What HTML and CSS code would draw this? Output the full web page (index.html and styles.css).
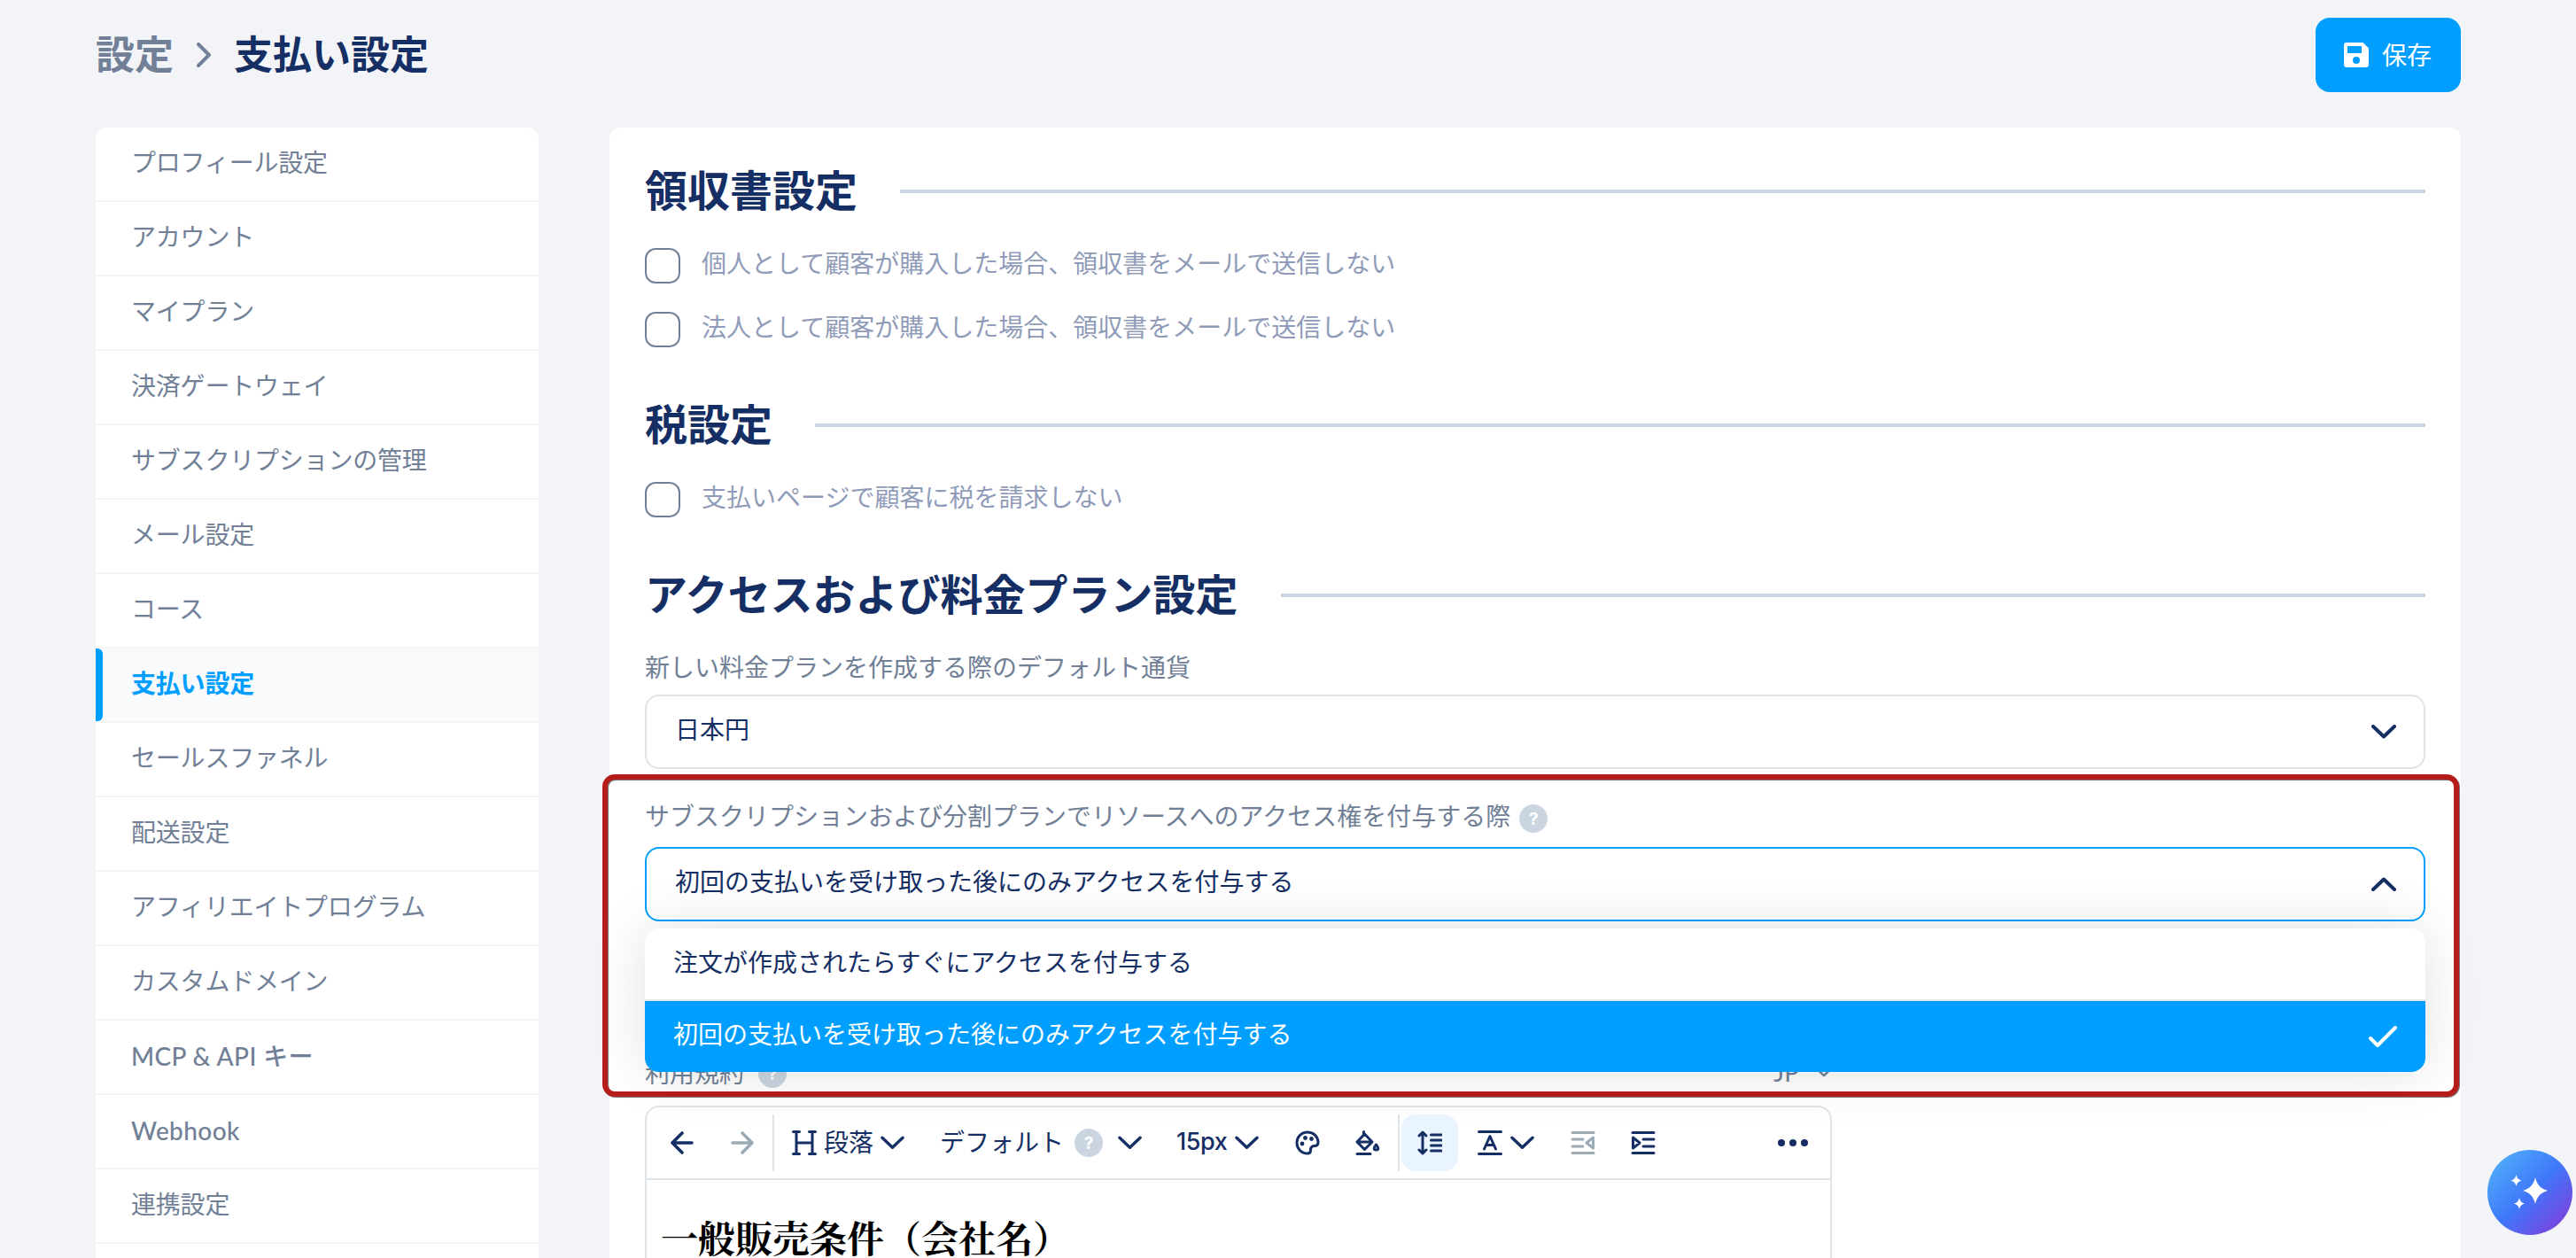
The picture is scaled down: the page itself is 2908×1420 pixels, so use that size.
FILE: index.html
```
<!DOCTYPE html>
<html lang="ja">
<head>
    <meta charset="UTF-8">
    <meta name="viewport" content="width=device-width, initial-scale=1.0">
    <title>支払い設定</title>
    <link rel="stylesheet" href="styles.css">
</head>
<body>
    <!-- Iconos compartidos -->
    <svg class="sprite" aria-hidden="true">
        <symbol id="chevron" viewBox="0 0 28 16">
            <path d="M2 2l12 11.5L26 2" />
        </symbol>
        <symbol id="arrow" viewBox="0 0 28 28">
            <path d="M25 14H3M14 3L3 14l11 11" />
        </symbol>
    </svg>

    <header class="topbar">
        <nav class="breadcrumb">
            <a class="parent">設定</a>
            <svg class="sep" viewBox="0 0 16 28"><path d="M2 2l12 12L2 26" /></svg>
            <h1>支払い設定</h1>
        </nav>
        <button class="save">
            <svg viewBox="0 0 28 28"><path fill-rule="evenodd" d="M3 0h18.5L28 6.5V25a3 3 0 0 1-3 3H3a3 3 0 0 1-3-3V3a3 3 0 0 1 3-3zM4 4v8h16V4zM14 16a4 4 0 1 0 0 8 4 4 0 0 0 0-8z" /></svg>
            <span>保存</span>
        </button>
    </header>

    <div class="layout">
        <aside class="sidebar">
            <a>プロフィール設定</a>
            <a>アカウント</a>
            <a>マイプラン</a>
            <a>決済ゲートウェイ</a>
            <a>サブスクリプションの管理</a>
            <a>メール設定</a>
            <a>コース</a>
            <a class="active">支払い設定</a>
            <a>セールスファネル</a>
            <a>配送設定</a>
            <a>アフィリエイトプログラム</a>
            <a>カスタムドメイン</a>
            <a class="latin">MCP &amp; API キー</a>
            <a class="latin">Webhook</a>
            <a>連携設定</a>
            <a></a>
        </aside>

        <main class="card">
            <h2>領収書設定</h2>
            <label class="check"><i></i><span>個人として顧客が購入した場合、領収書をメールで送信しない</span></label>
            <label class="check"><i></i><span>法人として顧客が購入した場合、領収書をメールで送信しない</span></label>

            <h2>税設定</h2>
            <label class="check"><i></i><span>支払いページで顧客に税を請求しない</span></label>

            <h2>アクセスおよび料金プラン設定</h2>
            <div class="field-label currency"><span>新しい料金プランを作成する際のデフォルト通貨</span></div>
            <div class="select">
                <span>日本円</span>
                <svg><use href="#chevron" /></svg>
            </div>

            <div class="field-label access"><span>サブスクリプションおよび分割プランでリソースへのアクセス権を付与する際</span><b class="help">?</b></div>
            <div class="select open">
                <span>初回の支払いを受け取った後にのみアクセスを付与する</span>
                <svg class="up"><use href="#chevron" /></svg>
                <div class="menu">
                    <div class="option"><span>注文が作成されたらすぐにアクセスを付与する</span></div>
                    <div class="option selected">
                        <span>初回の支払いを受け取った後にのみアクセスを付与する</span>
                        <svg viewBox="0 0 32 24"><path d="M2 14l8 8L30 2" /></svg>
                    </div>
                </div>
            </div>

            <div class="terms">
                <div class="field-label"><span>利用規約</span><b class="help">?</b></div>
                <div class="lang"><span>JP</span><svg><use href="#chevron" /></svg></div>
            </div>

            <div class="editor">
                <div class="toolbar">
                    <button class="tool"><svg class="bold"><use href="#arrow" /></svg></button>
                    <button class="tool off"><svg class="bold flip"><use href="#arrow" /></svg></button>
                    <hr>
                    <button class="drop block">
                        <svg viewBox="0 0 28 28"><path d="M1.500 1.500h7M19.500 1.500h7M1.500 26.500h7M19.500 26.500h7M5 1.500v25M23 1.500v25M5 14h18" /></svg>
                        <span>段落</span>
                        <svg class="caret"><use href="#chevron" /></svg>
                    </button>
                    <button class="drop font">
                        <span>デフォルト</span>
                        <b class="help">?</b>
                        <svg class="caret"><use href="#chevron" /></svg>
                    </button>
                    <button class="drop size">
                        <span>15px</span>
                        <svg class="caret"><use href="#chevron" /></svg>
                    </button>
                    <button class="tool">
                        <svg viewBox="0 0 28 28"><path d="M14 2C7 2 2 7.500 2 14s5 12 12 12c2.500 0 3.500-1.500 3.500-3.500 0-3 1-5 4-5 3 0 4.500-1.500 4.500-4C26 7 21 2 14 2z" /><g class="solid"><circle cx="8" cy="15" r="2.400" /><circle cx="11.500" cy="8.500" r="2.400" /><circle cx="18.500" cy="9.500" r="2.400" /></g></svg>
                    </button>
                    <button class="tool">
                        <svg viewBox="0 0 28 28"><path d="M9.500 1.500v3M10.500 4L2 13l8.500 8.500L19 13zM3 13h16M2 26.500h15M23.500 16c-3 4-3 6 0 6s3-2 0-6z" /></svg>
                    </button>
                    <hr>
                    <button class="tool on">
                        <svg viewBox="0 0 28 28"><path d="M6 2v24M2 6l4-4 4 4M2 22l4 4 4-4M15.500 5H27M15.500 11H27M15.500 17H27M15.500 23H27" /></svg>
                    </button>
                    <button class="drop align">
                        <svg viewBox="0 0 28 28"><path d="M1.500 1.500h25M1.500 26.500h25M7.500 21L14 6.500 20.500 21M10 16.500h8" /></svg>
                        <svg class="caret"><use href="#chevron" /></svg>
                    </button>
                    <button class="tool off">
                        <svg viewBox="0 0 28 28"><path d="M2 2.500h24M2 25.500h24M2 10h12M2 18h12M25.500 8v12l-7.500-6z" /></svg>
                    </button>
                    <button class="tool">
                        <svg viewBox="0 0 28 28"><path d="M2 2.500h24M2 25.500h24M14 10h12M14 18h12M2.500 8v12l7.500-6z" /></svg>
                    </button>
                    <button class="tool more">
                        <svg viewBox="0 0 36 28"><g class="solid"><circle cx="5" cy="14" r="4" /><circle cx="18" cy="14" r="4" /><circle cx="31" cy="14" r="4" /></g></svg>
                    </button>
                </div>
                <div class="content">
                    <h3>一般販売条件（会社名）</h3>
                </div>
            </div>
        </main>
    </div>

    <div class="highlight"></div>

    <button class="assistant">
        <svg viewBox="0 0 44 42"><path d="M28 4c2 8.500 6 12.500 14 15-8 2.500-12 6.500-14 15-2-8.500-6-12.500-14-15 8-2.500 12-6.500 14-15zM6.500 1c1 4 2.500 5.500 6 6.500-3.500 1-5 2.500-6 6.500-1-4-2.500-5.500-6-6.500 3.500-1 5-2.500 6-6.500zM10 27c1 4 2.500 5.500 6 6.500-3.500 1-5 2.500-6 6.500-1-4-2.500-5.500-6-6.500 3.500-1 5-2.500 6-6.500z" /></svg>
    </button>
</body>
</html>
```
FILE: styles.css
```
* {
    box-sizing: border-box;
}

body {
    margin: 0;
    height: 1420px;
    overflow: hidden;
    position: relative;
    background-color: #f2f4f8;
    color: #152e64;
    font-family: "Gilroy", "Noto Sans CJK JP", sans-serif;
    font-size: 28px;
    line-height: 40px;
}

button {
    font: inherit;
    color: inherit;
    border: none;
    padding: 0;
    background: none;
}

svg {
    display: block;
    flex: none;
    fill: none;
    stroke: currentColor;
    stroke-width: 3;
    stroke-linecap: round;
    stroke-linejoin: round;
}

.sprite {
    display: none;
}

.solid {
    fill: currentColor;
    stroke: none;
}

/* Cabecera */
.topbar {
    display: flex;
    justify-content: space-between;
    align-items: flex-start;
    height: 144px;
    padding: 20px 130px 0 108px;
}

.breadcrumb {
    display: flex;
    align-items: center;
    height: 84px;
    font-size: 44px;
    font-weight: 700;
}

.breadcrumb .parent {
    margin-top: -7px;
    color: #718096;
}

.breadcrumb .sep {
    width: 16px;
    height: 28px;
    margin: 0 26px 0 26px;
    color: #718096;
    stroke-width: 4;
}

.breadcrumb h1 {
    margin: -7px 0 0;
    font-size: 44px;
}

.save {
    display: flex;
    align-items: center;
    gap: 15px;
    width: 164px;
    height: 84px;
    padding-left: 32px;
    border-radius: 16px;
    background-color: #009fff;
    color: #fff;
}

.save span {
    margin-top: -3px;
}

.save svg {
    width: 28px;
    height: 28px;
    fill: #fff;
    stroke: none;
}

.layout {
    display: flex;
    gap: 80px;
    height: 1276px;
    padding: 0 130px 0 108px;
    overflow: hidden;
}

/* Menú lateral */
.sidebar {
    width: 500px;
    flex: none;
    border-radius: 12px 12px 0 0;
    background-color: #fff;
    color: #718096;
    overflow: hidden;
}

.sidebar a {
    display: block;
    height: 84px;
    padding: 18px 0 0 40px;
    border-bottom: 2px solid #f4f5f7;
    position: relative;
    letter-spacing: -0.2px;
}

.sidebar .latin {
    padding-top: 20px;
    font-family: "Lato", "Noto Sans CJK JP", sans-serif;
    font-weight: 500;
    letter-spacing: 0.4px;
}

.sidebar .active {
    background-color: #f8fafc;
    color: #009fff;
    font-weight: 700;
}

.sidebar .active::before {
    content: "";
    position: absolute;
    left: 0;
    top: 0;
    width: 8px;
    height: 82px;
    border-radius: 0 6px 6px 0;
    background-color: #009fff;
}

/* Contenido principal */
.card {
    flex: 1;
    padding: 40px 40px 0;
    border-radius: 12px 12px 0 0;
    background-color: #fff;
}

h2 {
    display: flex;
    align-items: flex-start;
    gap: 48px;
    height: 64px;
    margin: 0 0 32px;
    font-size: 48px;
    line-height: 57px;
}

h2::after {
    content: "";
    flex: 1;
    height: 4px;
    margin-top: 30px;
    background-color: #cbd5e1;
}

.check {
    display: flex;
    gap: 24px;
    margin-bottom: 32px;
    color: #8f9bb8;
}

.check i {
    width: 40px;
    height: 40px;
    border: 2px solid #718096;
    border-radius: 12px;
}

.check span {
    margin-top: -4px;
}

.check + h2 {
    margin-top: 56px;
}

.field-label {
    display: flex;
    gap: 10px;
    height: 40px;
    color: #718096;
}

.field-label.currency {
    margin: -4px 0 12px;
}

.help {
    display: flex;
    align-items: center;
    justify-content: center;
    width: 32px;
    height: 32px;
    border-radius: 50%;
    background-color: #cbd5e1;
    color: #fff;
    font: 700 19px Inter, sans-serif;
}

.field-label .help {
    margin-top: 8px;
}

.select {
    display: flex;
    align-items: flex-start;
    justify-content: space-between;
    position: relative;
    height: 84px;
    padding: 16px 31px 0 32px;
    border: 2px solid #dfe4e8;
    border-radius: 16px;
    background-color: #fff;
}

.select > svg {
    width: 28px;
    height: 16px;
    margin-top: 16px;
    stroke-width: 4;
}

.select .up {
    transform: scaleY(-1);
}

.select.open {
    border-color: #009fff;
}

.field-label.access {
    margin-top: 32px;
    margin-bottom: 16px;
}

/* Lista desplegable */
.menu {
    position: absolute;
    top: 90px;
    left: -2px;
    right: -2px;
    border-radius: 16px;
    background-color: #fff;
    box-shadow: 0 0 64px rgba(0, 0, 0, 0.12);
    overflow: hidden;
}

.option {
    display: flex;
    justify-content: space-between;
    height: 82px;
    padding: 17px 32px 0;
    border-bottom: 2px solid #e2e8f0;
}

.option.selected {
    height: 80px;
    padding-top: 16px;
    border: none;
    background-color: #009fff;
    color: #fff;
}

.option svg {
    width: 32px;
    height: 24px;
    margin-top: 12px;
    stroke-width: 4;
}

.terms {
    display: flex;
    justify-content: space-between;
    width: 1340px;
    height: 58px;
    margin-top: 150px;
}

.terms .field-label {
    gap: 16px;
}

.terms .help {
    margin-top: 6px;
}

.lang {
    display: flex;
    gap: 20px;
    color: #718096;
    font-family: "Lato", sans-serif;
}

.lang svg {
    width: 16px;
    height: 10px;
    margin: 16px 1px 0 0;
    stroke-width: 4;
}

/* Editor de texto */
.editor {
    width: 1340px;
    height: 172px;
    border: 2px solid #dfe4e8;
    border-bottom: none;
    border-radius: 16px 16px 0 0;
}

.toolbar {
    display: flex;
    align-items: center;
    gap: 4px;
    height: 82px;
    padding-left: 8px;
    border-bottom: 2px solid #dfe4e8;
}

.toolbar hr {
    width: 2px;
    height: 64px;
    margin: 0 -2px;
    border: none;
    background-color: #dfe4e8;
}

.tool {
    display: flex;
    align-items: center;
    justify-content: center;
    width: 64px;
    height: 64px;
    border-radius: 16px;
}

.tool svg,
.drop svg {
    width: 28px;
    height: 28px;
}

.tool .bold {
    stroke-width: 3.6;
}

.tool.off {
    color: #9aabb5;
}

.tool.on {
    background-color: #e9f4ff;
}

.flip {
    transform: scaleX(-1);
}

.drop {
    display: flex;
    align-items: center;
    height: 64px;
}

.drop span {
    margin-top: -5px;
}

.drop .caret {
    width: 27px;
    height: 16px;
    stroke-width: 3.5;
}

.block {
    width: 164px;
    padding-left: 18px;
    gap: 8px;
}

.font {
    width: 262px;
    padding-left: 17px;
}

.font .help {
    margin: 0 17px 0 12px;
}

.size {
    width: 130px;
    padding-left: 18px;
    gap: 9px;
}

.size span {
    width: 57px;
    margin-top: -2px;
    font-family: Inter, sans-serif;
    font-size: 27px;
    font-weight: 500;
    letter-spacing: -0.4px;
}

.align {
    width: 101px;
    padding-left: 18px;
    gap: 9px;
}

.tool.more {
    margin: 0 10px 0 auto;
}

.tool.more svg {
    width: 36px;
}

.content {
    padding: 34px 16px 0;
}

.content h3 {
    margin: 0;
    color: #000;
    font-family: "Hiragino Mincho ProN", "Noto Serif CJK JP", "Noto Sans CJK JP", serif;
    font-size: 42px;
    line-height: 54px;
    padding-top: 3px;
}

/* Marco rojo alrededor del campo de acceso */
.highlight {
    position: absolute;
    left: 680px;
    top: 874px;
    width: 2096px;
    height: 364px;
    border: 6px solid #b71c1c;
    border-radius: 14px;
    filter: drop-shadow(1px 1px 0 #7a7a7a);
}

.assistant {
    display: flex;
    align-items: center;
    justify-content: center;
    position: absolute;
    right: 4px;
    top: 1298px;
    width: 96px;
    height: 96px;
    border-radius: 50%;
    background: linear-gradient(135deg, #4facf7 10%, #3f78fb 50%, #7b42dd 90%);
}

.assistant svg {
    width: 44px;
    height: 42px;
    fill: #fff;
    stroke: none;
}
```
